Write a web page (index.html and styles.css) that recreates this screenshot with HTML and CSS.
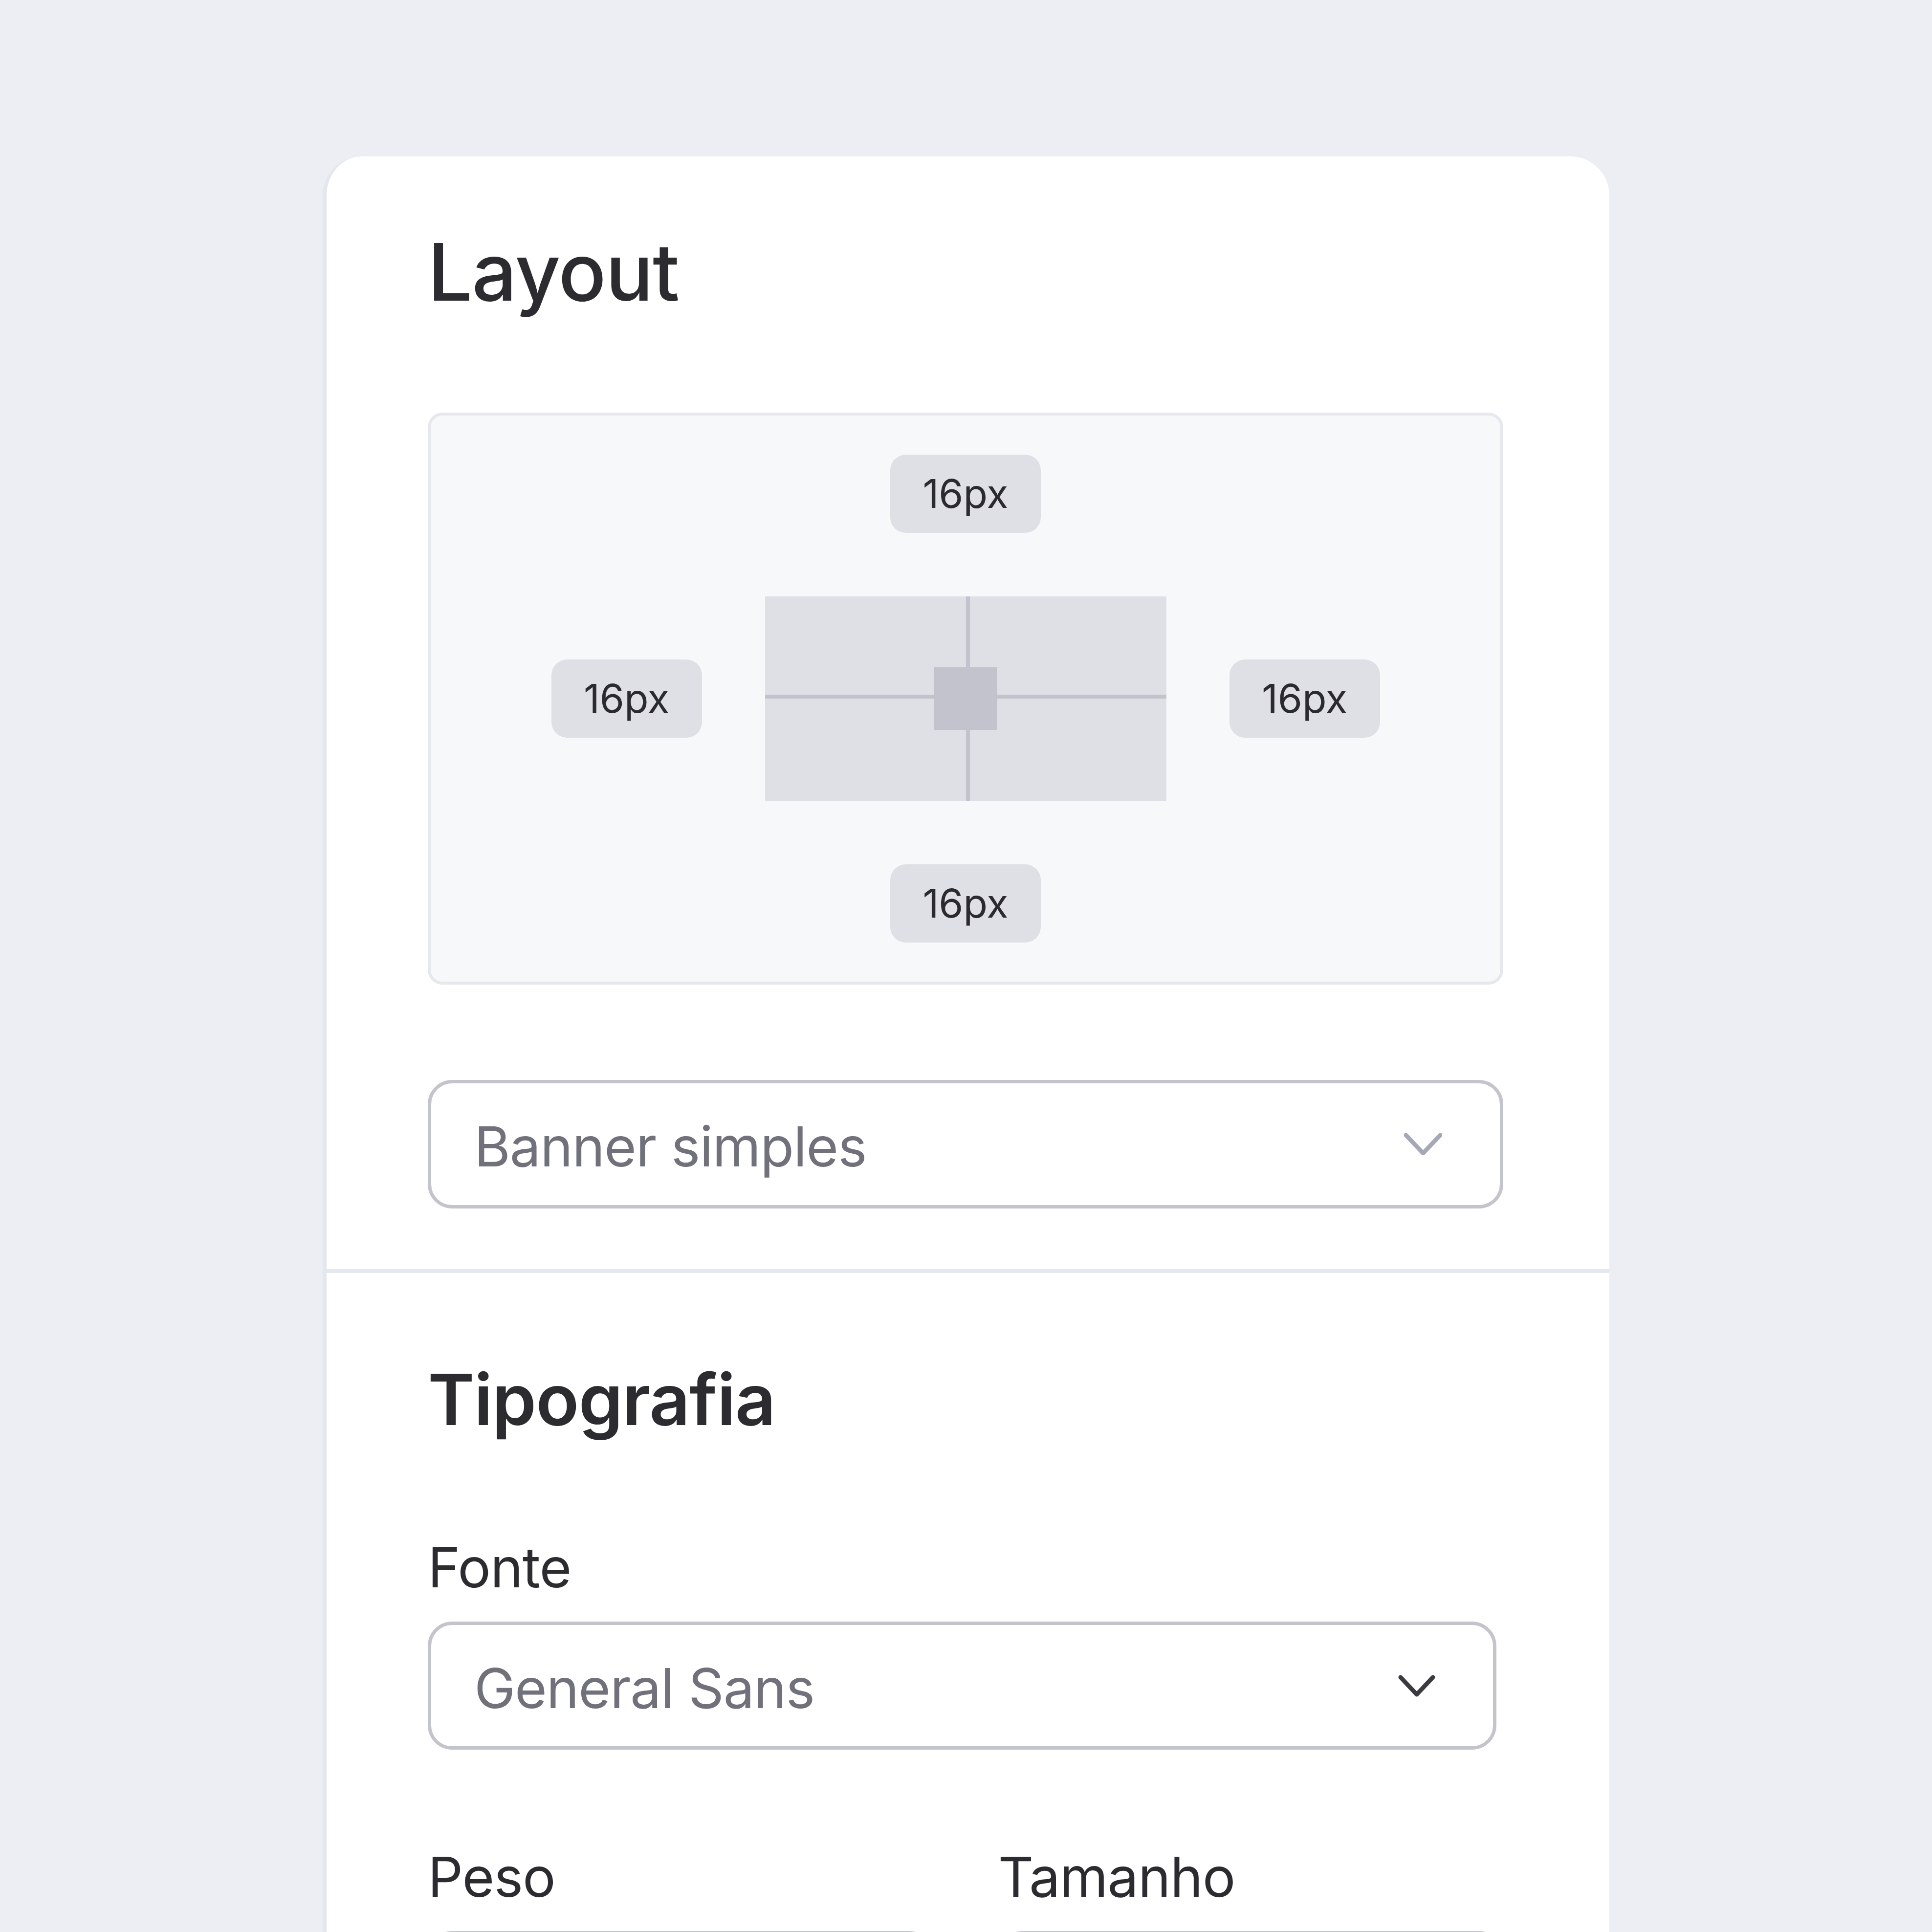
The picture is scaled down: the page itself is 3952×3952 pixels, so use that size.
FILE: index.html
```html
<!DOCTYPE html>
<html lang="pt-BR">
<head>
    <meta charset="UTF-8">
    <meta name="viewport" content="width=device-width, initial-scale=1.0">
    <title>Editor - Layout</title>
    <link rel="stylesheet" href="styles.css">
</head>
<body>
    <div class="page">
        <div class="panel">
            <!-- Layout section -->
            <section class="section">
                <h2 class="layout-title">Layout</h2>

                <div class="preview">
                    <div class="chip">16px</div>
                    <div class="preview-row">
                        <div class="chip">16px</div>
                        <div class="canvas">
                            <div class="canvas-anchor"></div>
                        </div>
                        <div class="chip">16px</div>
                    </div>
                    <div class="chip">16px</div>
                </div>

                <div class="select layout-select">
                    <span>Banner simples</span>
                    <svg class="chevron chevron-muted" width="78" height="45" viewBox="0 0 78 45">
                        <polyline points="4,4 39,41 74,4" />
                    </svg>
                </div>
            </section>

            <!-- Typography section -->
            <section class="section">
                <h2 class="type-title">Tipografia</h2>

                <div class="field">
                    <div class="field-label">Fonte</div>
                    <div class="select font-select">
                        <span>General Sans</span>
                        <svg class="chevron chevron-dark" width="76" height="45" viewBox="0 0 76 45">
                            <polyline points="5,5 38,40 71,5" />
                        </svg>
                    </div>
                </div>

                <!-- weight / size selects start right at the bottom edge -->
                <div class="field-row">
                    <div class="field">
                        <div class="field-label">Peso</div>
                        <div class="select"></div>
                    </div>
                    <div class="field">
                        <div class="field-label">Tamanho</div>
                        <div class="select"></div>
                    </div>
                </div>
            </section>
        </div>
    </div>
</body>
</html>
```

FILE: styles.css
```css
body {
    margin: 0;
    font-family: Inter, "Noto Sans", sans-serif;
    background: #edeef3;
    color: #2b2b30;
    height: 3952px;
    overflow: hidden;
}

.page {
    padding: 320px 0 0 660px;
}

/* Settings panel */
.panel {
    box-sizing: border-box;
    width: 2632px;
    min-height: 3800px;
    background: #fff;
    border-left: 8px solid #e4e7ef;
    border-radius: 80px 80px 0 0;
}

.section {
    padding: 155px 217px 124px 207px;
}

.section + .section {
    border-top: 8px solid #e5e8f0;
    padding-top: 186px;
}

.layout-title {
    margin: 0 0 207px;
    font-size: 162px;
    font-weight: 500;
    line-height: 1;
    letter-spacing: -1.3px;
}

.type-title {
    margin: 0 0 215px;
    font-size: 145px;
    font-weight: 600;
    line-height: 1;
    letter-spacing: -1px;
}

/* Spacing preview */
.preview {
    display: flex;
    flex-direction: column;
    align-items: center;
    gap: 130px;
    padding: 80px 0;
    background: #f7f8fa;
    border: 6px solid #e7e8ee;
    border-radius: 30px;
}

.preview-row {
    display: flex;
    align-items: center;
    gap: 129px;
}

.chip {
    display: flex;
    align-items: center;
    justify-content: center;
    width: 308px;
    height: 160px;
    border-radius: 32px;
    background: #dfe0e5;
    color: #2a2a2f;
    font-size: 81px;
    line-height: 1;
}

.canvas {
    position: relative;
    width: 821px;
    height: 418px;
    background: #dfe0e5;
}

.canvas::before {
    content: "";
    position: absolute;
    top: 0;
    bottom: 0;
    left: 411px;
    width: 8px;
    background: #c3c3cd;
}

.canvas::after {
    content: "";
    position: absolute;
    left: 0;
    right: 0;
    top: 201px;
    height: 8px;
    background: #c3c3cd;
}

.canvas-anchor {
    position: absolute;
    left: 346px;
    top: 145px;
    width: 129px;
    height: 128px;
    background: #c3c3cd;
    z-index: 1;
}

/* Selects */
.select {
    box-sizing: border-box;
    display: flex;
    align-items: center;
    justify-content: space-between;
    height: 263px;
    padding: 10px 118px 0 88px;
    border: 7px solid #c4c4cd;
    border-radius: 50px;
    color: #70717b;
    font-size: 113px;
    line-height: 1;
    letter-spacing: -1.2px;
}

.layout-select {
    margin-top: 195px;
}

.font-select {
    width: 2186px;
    height: 262px;
}

.chevron {
    flex-shrink: 0;
    margin-top: -10px;
    fill: none;
    stroke-linecap: round;
    stroke-linejoin: round;
}

.chevron-muted {
    stroke: #a6a8b6;
    stroke-width: 9;
}

.chevron-dark {
    stroke: #3a3a40;
    stroke-width: 9;
}

.field-label {
    margin-bottom: 54px;
    font-size: 113px;
    line-height: 1;
    letter-spacing: -1px;
}

.field-row {
    display: grid;
    grid-template-columns: 1fr 1fr;
    gap: 133px;
    margin-top: 204px;
}
```
